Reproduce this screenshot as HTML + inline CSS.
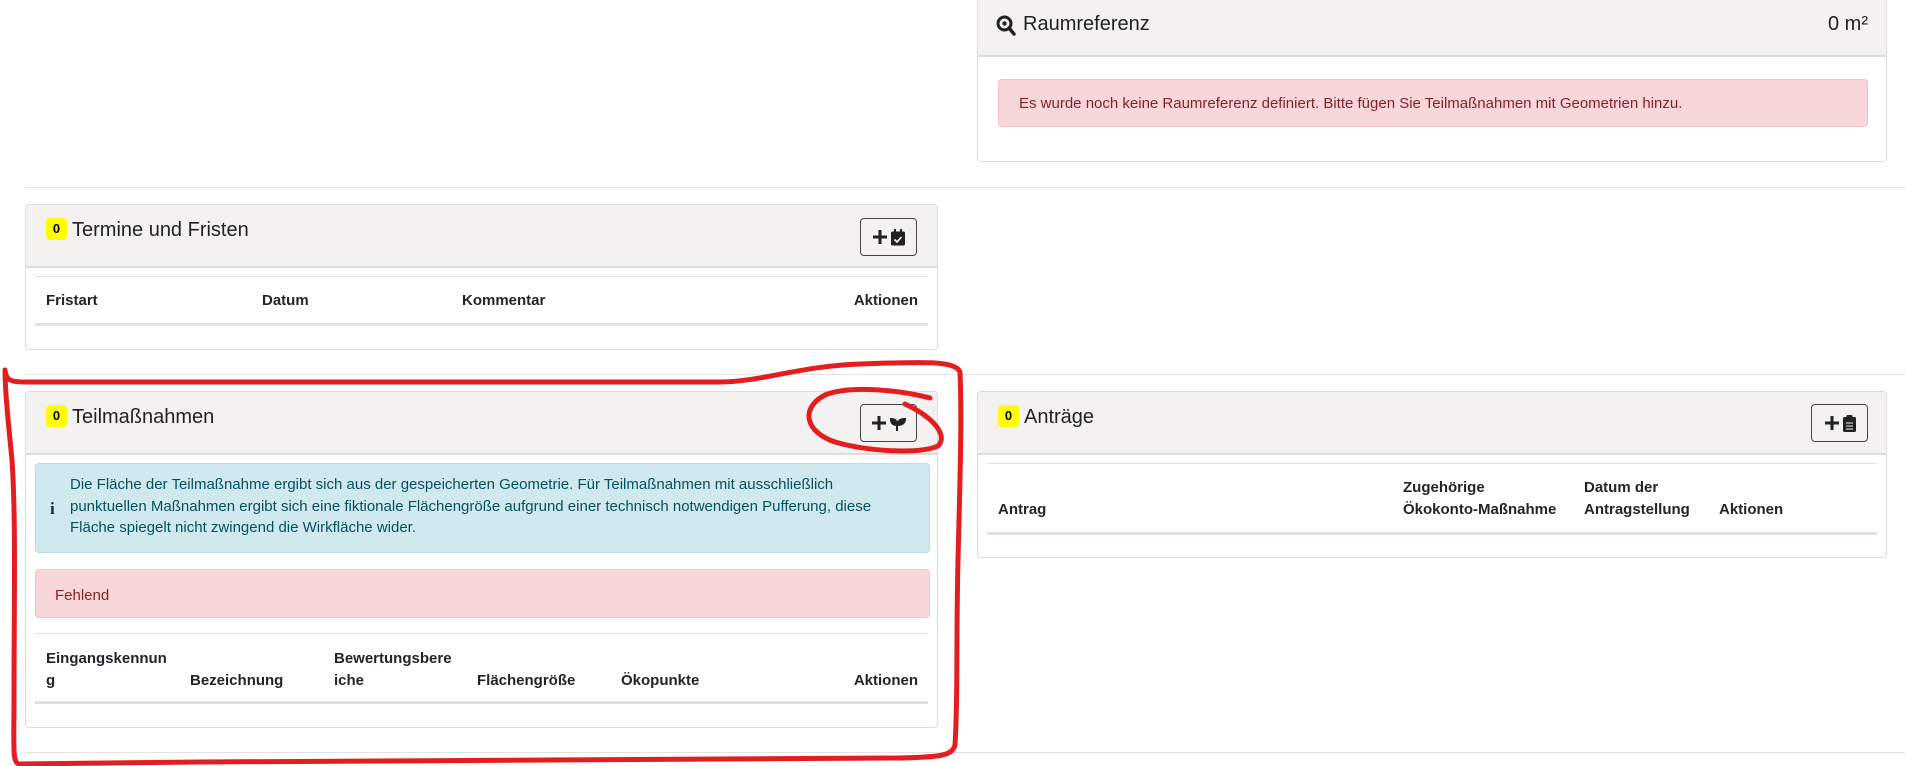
<!DOCTYPE html>
<html><head><meta charset="utf-8"><style>
*{box-sizing:border-box;margin:0;padding:0}
body{width:1905px;height:766px;background:#fff;position:relative;overflow:hidden;font-family:"Liberation Sans",sans-serif;color:#212529}
.abs{position:absolute}
.panel{position:absolute;border:1px solid #dcdcdc;border-radius:4px;background:#fff}
.hdr{position:absolute;left:0;right:0;top:0;background:#f3f2f1;border-bottom:2px solid #dcdcdc;border-radius:4px 4px 0 0}
.title{position:absolute;font-size:20px;color:#222;white-space:nowrap}
.badge{display:inline-block;background:#ffff00;color:#000;font-weight:bold;font-size:13px;width:21px;height:22px;line-height:22px;text-align:center;border-radius:4px;vertical-align:3px;margin-right:5px}
.btn{position:absolute;border:1px solid #444;border-radius:4px;width:57px;height:38px;display:flex;align-items:center;justify-content:center;gap:3px}
.hr{position:absolute;height:1px;background:#e2e2e2}
.line{position:absolute;height:1px;background:#dee2e6}
.line2{position:absolute;height:3px;background:#dee2e6}
.th{position:absolute;font-weight:bold;font-size:15px;line-height:22px;color:#212529;white-space:nowrap}
.danger{position:absolute;background:#f8d7da;border:1px solid #f5c2c7;border-radius:4px;color:#842029;font-size:15px}
.info{position:absolute;background:#cfe9ee;border:1px solid #b6e0e8;border-radius:4px;color:#055160;font-size:15px;line-height:21.5px}
</style></head><body>

<!-- Raumreferenz -->
<div class="panel" style="left:977px;top:-2px;width:910px;height:164px">
  <div class="hdr" style="height:58px"></div>
  <svg class="abs" style="left:18px;top:16px" width="20" height="22" viewBox="0 0 20 22"><circle cx="8.5" cy="8.5" r="6.5" fill="none" stroke="#222" stroke-width="3"/><circle cx="8.5" cy="8.5" r="2.2" fill="#222"/><path d="M13 13 L18 19" stroke="#222" stroke-width="3.5" stroke-linecap="round"/></svg>
  <div class="title" style="left:45px;top:14px">Raumreferenz</div>
  <div class="title" style="right:18px;top:14px">0 m²</div>
  <div class="danger" style="left:20px;top:80px;width:870px;height:48px;padding:15px 0 0 20px">Es wurde noch keine Raumreferenz definiert. Bitte fügen Sie Teilmaßnahmen mit Geometrien hinzu.</div>
</div>
<div class="hr" style="left:25px;top:187px;width:1880px"></div>

<!-- Termine -->
<div class="panel" style="left:25px;top:204px;width:913px;height:146px">
  <div class="hdr" style="height:63px"></div>
  <div class="title" style="left:20px;top:13px"><span class="badge">0</span>Termine und Fristen</div>
  <div class="btn" style="left:834px;top:13px">
    <svg width="16" height="16" viewBox="0 0 16 16"><path d="M8 1v14M1 8h14" stroke="#222" stroke-width="3"/></svg>
    <svg width="14" height="17" viewBox="0 0 14 17"><rect x="3" y="0" width="2" height="4" fill="#222"/><rect x="9" y="0" width="2" height="4" fill="#222"/><rect x="0" y="2.5" width="14" height="14" rx="1.5" fill="#222"/><path d="M3.5 10.5l2.5 2.5 4.5-5" stroke="#fff" stroke-width="1.6" fill="none"/></svg>
  </div>
  <div class="line" style="left:9px;right:9px;top:71px"></div>
  <div class="th" style="left:20px;top:85px">Fristart</div>
  <div class="th" style="left:236px;top:85px">Datum</div>
  <div class="th" style="left:436px;top:85px">Kommentar</div>
  <div class="th" style="right:19px;top:85px">Aktionen</div>
  <div class="line2" style="left:9px;right:9px;top:118px"></div>
</div>
<div class="hr" style="left:25px;top:374px;width:1880px"></div>

<!-- Teilmaßnahmen -->
<div class="panel" style="left:25px;top:391px;width:913px;height:337px">
  <div class="hdr" style="height:63px"></div>
  <div class="title" style="left:20px;top:13px"><span class="badge">0</span>Teilmaßnahmen</div>
  <div class="btn" style="left:834px;top:12px">
    <svg width="16" height="16" viewBox="0 0 16 16"><path d="M8 1v14M1 8h14" stroke="#222" stroke-width="3"/></svg>
    <svg width="16" height="15" viewBox="0 0 16 15"><path d="M7 15V8C7 5 5 3 1 3c0 4 2 6 6 6M8 8c0-3 2-5 7-5 0 4-3 6-7 6" fill="#222" stroke="#222" stroke-width="2"/></svg>
  </div>
  <div class="info" style="left:9px;top:71px;width:895px;height:90px;padding:10px 0 0 34px">Die Fläche der Teilmaßnahme ergibt sich aus der gespeicherten Geometrie. Für Teilmaßnahmen mit ausschließlich<br>punktuellen Maßnahmen ergibt sich eine fiktionale Flächengröße aufgrund einer technisch notwendigen Pufferung, diese<br>Fläche spiegelt nicht zwingend die Wirkfläche wider.
    <span class="abs" style="left:14px;top:34px;font-weight:bold;font-family:'Liberation Serif',serif;font-size:17px;color:#033">i</span></div>
  <div class="danger" style="left:9px;top:177px;width:895px;height:49px;padding:17px 0 0 19px">Fehlend</div>
  <div class="line" style="left:9px;right:9px;top:241px"></div>
  <div class="th" style="left:20px;top:256px">Eingangskennun<br>g</div>
  <div class="th" style="left:164px;top:278px">Bezeichnung</div>
  <div class="th" style="left:308px;top:256px">Bewertungsbere<br>iche</div>
  <div class="th" style="left:451px;top:278px">Flächengröße</div>
  <div class="th" style="left:595px;top:278px">Ökopunkte</div>
  <div class="th" style="right:19px;top:278px">Aktionen</div>
  <div class="line2" style="left:9px;right:9px;top:309px"></div>
</div>
<div class="hr" style="left:25px;top:752px;width:1880px"></div>

<!-- Anträge -->
<div class="panel" style="left:977px;top:391px;width:910px;height:167px">
  <div class="hdr" style="height:63px"></div>
  <div class="title" style="left:20px;top:13px"><span class="badge">0</span>Anträge</div>
  <div class="btn" style="left:833px;top:12px">
    <svg width="16" height="16" viewBox="0 0 16 16"><path d="M8 1v14M1 8h14" stroke="#222" stroke-width="3"/></svg>
    <svg width="13" height="17" viewBox="0 0 13 17"><rect x="0" y="2" width="13" height="15" rx="1.5" fill="#222"/><rect x="3.5" y="0" width="6" height="4" rx="1" fill="#222"/><path d="M3 8h7M3 11h7M3 14h7" stroke="#f3f2f1" stroke-width="1"/></svg>
  </div>
  <div class="line" style="left:9px;right:9px;top:71px"></div>
  <div class="th" style="left:20px;top:107px">Antrag</div>
  <div class="th" style="left:425px;top:85px">Zugehörige<br>Ökokonto-Maßnahme</div>
  <div class="th" style="left:606px;top:85px">Datum der<br>Antragstellung</div>
  <div class="th" style="left:741px;top:107px">Aktionen</div>
  <div class="line2" style="left:9px;right:9px;top:140px"></div>
</div>

<!-- red annotations -->
<svg class="abs" style="left:0;top:0" width="1905" height="766" viewBox="0 0 1905 766">
  <g fill="none" stroke="#e41e1e" stroke-width="5" stroke-linecap="round" stroke-linejoin="round">
    <path d="M5 370 C6 380 10 382 25 382 L720 382 C760 382 800 366 860 364 C920 362 955 360 960 372 C962 420 960 480 958 560 C956 640 958 700 955 745 C952 756 940 757 900 758 C700 760 400 760 200 762 L20 764 C12 764 14 750 14 700 C14 600 16 520 12 460 C8 420 5 390 5 370"/>
    <path d="M930 398 C900 390 850 385 825 395 C800 408 805 432 835 442 C870 452 920 454 938 446 C948 436 935 418 905 404"/>
  </g>
</svg>
</body></html>
